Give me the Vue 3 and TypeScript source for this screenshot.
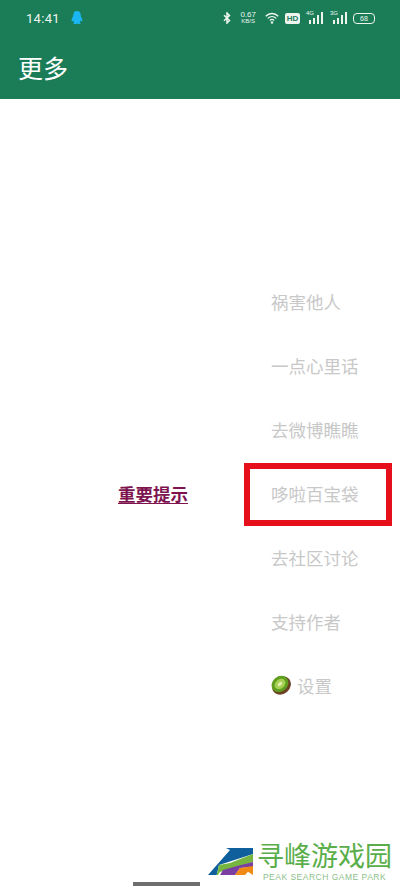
<template>
  <div class="page">
    <header class="appbar">
      <div class="status">
        <span class="time">14:41</span>
        <svg class="qq" viewBox="0 0 12 14" width="12" height="14">
          <path d="M6 0C3.400 0 2.200 2 2.200 4.400 2.200 5 2 5.600 1.500 6.500.8 7.800.4 9.200.7 10.200c.3.500 1 0 1.500-.8.200.8.600 1.500 1.100 2-.8.300-1.300.7-1.100 1.200.3.600 2.200.6 3.300.2.300 0 .6 0 .9 0 1.100.4 3 .4 3.300-.2.200-.5-.3-.9-1.100-1.200.5-.5.900-1.200 1.100-2 .5.800 1.200 1.300 1.500.8.300-1-.1-2.400-.8-3.700C10 5.600 9.800 5 9.800 4.400 9.800 2 8.600 0 6 0Z" fill="#1ab6f2" />
        </svg>
        <span class="spacer"></span>
        <svg class="bt" viewBox="0 0 8 12" width="8" height="12">
          <path d="M1 3.200 6.500 8.500 4 11V1L6.500 3.500 1 8.800" fill="none" stroke="#eef5f1" stroke-width="1.500" />
        </svg>
        <span class="speed"><b>0.67</b><i>KB/S</i></span>
        <svg class="wifi" viewBox="0 0 14 12" width="14" height="12">
          <path d="M.7 4.200C4.300.6 9.700.6 13.300 4.200M2.700 6.400C5.200 4 8.800 4 11.300 6.400M4.800 8.500C6 7.300 8 7.300 9.200 8.500" fill="none" stroke="#eef5f1" stroke-width="1.300" />
          <circle cx="7" cy="10.500" r="1.200" fill="#eef5f1" />
        </svg>
        <span class="hd">HD</span>
        <span v-for="s in signals" :key="s" class="signal">
          <em>{{ s }}</em>
          <svg viewBox="0 0 17 12" width="17" height="12">
            <rect x="3" y="8" width="2" height="4" fill="#eef5f1" />
            <rect x="7" y="6" width="2" height="6" fill="#eef5f1" />
            <rect x="11" y="3" width="2" height="9" fill="#eef5f1" />
            <rect x="15" y="0" width="2" height="12" fill="#eef5f1" />
          </svg>
        </span>
        <span class="battery">68</span>
      </div>
      <h1 class="title">更多</h1>
    </header>

    <main class="menu">
      <div v-for="item in items" :key="item.label" class="row">
        <div class="tip-cell">
          <span v-if="item.tip" class="tip">重要提示</span>
        </div>
        <div class="entry">
          <svg v-if="item.kiwi" class="kiwi" viewBox="0 0 20 20" width="20" height="20">
            <ellipse cx="10.500" cy="10.500" rx="10" ry="8.500" transform="rotate(-40 10.500 10.500)" fill="#6b4426" />
            <ellipse cx="9" cy="9" rx="9" ry="7.500" transform="rotate(-40 9 9)" fill="#5f9e1f" />
            <ellipse cx="9" cy="9" rx="6" ry="4.500" transform="rotate(-40 9 9)" fill="#a6d052" />
            <ellipse cx="9" cy="9" rx="2.600" ry="1.600" transform="rotate(-40 9 9)" fill="#e2efb0" />
          </svg>
          <span>{{ item.label }}</span>
          <span v-if="item.marked" class="marker"></span>
        </div>
      </div>
    </main>

    <div class="home-bar"></div>

    <div class="watermark">
      <svg class="peak" viewBox="0 0 46 30" width="46" height="30">
        <path d="M0 29 22 4 18 2H45V8L11 19 8.700 29Z" fill="#0f5f9c" />
        <path d="M8.700 29 11 19 22 17 45 8V16L29 21 12 26 10 29Z" fill="#76b640" />
        <path d="M12 29 15 24 29 20 45 16V21L32 22 27 29Z" fill="#7a3fa0" />
        <path d="M27 29 32 22 45 20V29L40 25.700 37 29Z" fill="#f08a14" />
      </svg>
      <div class="brand">
        <div class="cn">寻峰游戏园</div>
        <div class="en">PEAK SEARCH GAME PARK</div>
      </div>
    </div>
  </div>
</template>

<script setup lang="ts">
interface MenuItem {
  label: string
  tip?: boolean
  marked?: boolean
  kiwi?: boolean
}

const signals = ['4G', '3G']

const items: MenuItem[] = [
  { label: '祸害他人' },
  { label: '一点心里话' },
  { label: '去微博瞧瞧' },
  { label: '哆啦百宝袋', tip: true, marked: true },
  { label: '去社区讨论' },
  { label: '支持作者' },
  { label: '设置', kiwi: true },
]
</script>

<style>
html,
body {
  margin: 0;
  background: #fff;
}
</style>

<style scoped>
.page {
  position: relative;
  width: 400px;
  height: 888px;
  overflow: hidden;
  background: #fff;
  font-family: "Liberation Sans", "Noto Sans CJK SC", sans-serif;
}

.appbar {
  height: 99px;
  box-sizing: border-box;
  background: #1a7d58;
  color: #fff;
}

.status {
  display: flex;
  align-items: center;
  height: 36px;
  padding: 0 25px 0 26px;
  color: #eef5f1;
}

.time {
  font-family: Roboto, "Liberation Sans", sans-serif;
  font-size: 13px;
  letter-spacing: 0.3px;
}

.qq {
  margin-left: 11px;
}

.spacer {
  flex: 1;
}

.speed {
  display: flex;
  flex-direction: column;
  align-items: center;
  margin-left: 9px;
  line-height: 7px;
}

.speed b {
  font-size: 8px;
  font-weight: 400;
}

.speed i {
  font-size: 6px;
  font-style: normal;
}

.wifi {
  margin-left: 9px;
}

.hd {
  width: 15px;
  height: 11px;
  margin-left: 6px;
  border-radius: 2px;
  background: #eef5f1;
  color: #1a7d58;
  font-size: 8px;
  font-weight: 700;
  line-height: 11px;
  text-align: center;
}

.signal {
  position: relative;
  margin-left: 6px;
  height: 12px;
}

.signal + .signal {
  margin-left: 7px;
}

.signal svg {
  display: block;
}

.signal em {
  position: absolute;
  top: -2px;
  left: 0;
  font-size: 6px;
  font-style: normal;
  line-height: 7px;
}

.battery {
  width: 22px;
  height: 11px;
  box-sizing: border-box;
  margin-left: 6px;
  border: 1px solid #eef5f1;
  border-radius: 4px;
  font-size: 7px;
  line-height: 9px;
  text-align: center;
}

.title {
  margin: 15px 0 0 18px;
  font-size: 25px;
  font-weight: 400;
  line-height: 36px;
}

.menu {
  padding-top: 170px;
}

.row {
  display: grid;
  grid-template-columns: 271px 1fr;
  height: 64px;
  align-items: center;
}

.tip-cell {
  display: flex;
  padding-left: 118px;
}

.tip {
  color: #7d1450;
  font-size: 17.500px;
  font-weight: 700;
  text-decoration: underline;
  text-underline-offset: 2px;
}

.entry {
  position: relative;
  display: flex;
  align-items: center;
  align-self: stretch;
  gap: 6px;
  color: #c8c8c8;
  font-size: 17.500px;
}

.marker {
  position: absolute;
  top: 2px;
  left: -27px;
  width: 148px;
  height: 63px;
  box-sizing: border-box;
  border: 6px solid #e60f1c;
}

.home-bar {
  position: absolute;
  left: 133px;
  bottom: 2px;
  width: 67px;
  height: 4px;
  background: #6e6e6e;
}

.watermark {
  position: absolute;
  left: 208px;
  top: 846px;
  display: flex;
  gap: 3px;
}

.brand {
  display: flex;
  flex-direction: column;
  align-items: center;
  margin-top: -2px;
}

.cn {
  color: #5aae4a;
  font-size: 27px;
  line-height: 27px;
  white-space: nowrap;
}

.en {
  margin-top: 1px;
  color: #8cc08a;
  font-size: 8.500px;
  line-height: 10px;
  letter-spacing: 0.5px;
  white-space: nowrap;
}
</style>
